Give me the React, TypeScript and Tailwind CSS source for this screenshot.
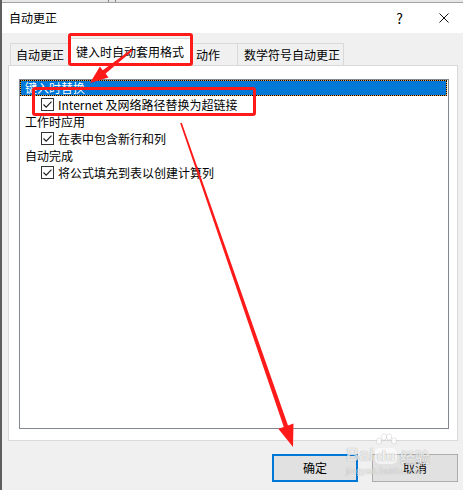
import React from 'react';

const font = "font-['Noto_Sans_CJK_SC','Microsoft_YaHei',sans-serif]";

const Check: React.FC = () => (
  <span className="w-[13px] h-[13px] border border-[#333333] bg-white flex items-center justify-center shrink-0">
    <svg width="11" height="11" viewBox="0 0 11 11">
      <path d="M1.5 5.5 L4.2 8.2 L9.5 2.6" fill="none" stroke="#1a1a1a" strokeWidth="1.1" />
    </svg>
  </span>
);

const CheckRow: React.FC<{ label: string }> = ({ label }) => (
  <div className="h-[17px] flex items-center pl-[21px] gap-[4px] text-[12px] text-black leading-[17px]">
    <Check />
    <span>{label}</span>
  </div>
);

const GroupRow: React.FC<{ label: string }> = ({ label }) => (
  <div className="h-[17px] flex items-center pl-[5px] text-[12px] text-black leading-[17px]">{label}</div>
);

export default function App() {
  return (
    <div className={`relative w-[463px] h-[490px] overflow-hidden flex bg-[#f0f0f0] ${font}`}>
      {/* window edge */}
      <div className="w-[2px] bg-[#5e5e5e] shrink-0" />

      <div className="flex-1 flex flex-col">
        {/* strip of the window behind */}
        <div className="h-[3px] bg-[#e6e6e6] border-b border-[#a3a3a3] flex">
          <div className="ml-[106px] w-px bg-[#8a8a8a]" />
          <div className="ml-[6px] w-px bg-[#8a8a8a]" />
        </div>

        {/* title bar */}
        <div className="h-[30px] bg-white flex items-center pl-[7px] pr-[14px]">
          <span className="text-[12px] text-black leading-none">自动更正</span>
          <span className="ml-auto text-[14px] text-black leading-none mr-[36px]">?</span>
          <svg width="10" height="10" viewBox="0 0 10 10">
            <path d="M0.5 0.5 L9.5 9.5 M9.5 0.5 L0.5 9.5" stroke="#111" strokeWidth="1" />
          </svg>
        </div>

        {/* body */}
        <div className="flex-1 flex flex-col">
          {/* tabs */}
          <div className="h-[32px] flex items-end pl-[8px] text-[12px] text-black">
            <div className="w-[58px] h-[22px] border-t border-l border-[#d9d9d9] bg-[#f0f0f0] flex items-center pl-[5px] leading-none">自动更正</div>
            <div className="relative z-10 w-[125px] h-[28px] -mb-px border border-b-0 border-[#d9d9d9] bg-white flex items-center pl-[7px] pb-[2px] leading-none">键入时自动套用格式</div>
            <div className="w-[44px] h-[22px] border-t border-[#d9d9d9] bg-[#f0f0f0] flex items-center pl-[3px] leading-none">动作</div>
            <div className="w-[107px] h-[22px] border-t border-l border-r border-[#d9d9d9] bg-[#f0f0f0] flex items-center pl-[6px] leading-none">数学符号自动更正</div>
          </div>

          {/* tab page */}
          <div className="ml-[6px] w-[450px] h-[376px] border border-[#d9d9d9] bg-white pt-[13px] pl-[10px]">
            <div className="w-[430px] h-[350px] border border-[#828790] bg-white">
              <div className="w-[427px] h-[16px] bg-[#0078d7] border border-[#e8a040] outline outline-1 outline-dotted outline-black -outline-offset-1 flex items-center pl-[4px] text-[12px] text-white leading-none">
                键入时替换
              </div>
              <CheckRow label="Internet 及网络路径替换为超链接" />
              <GroupRow label="工作时应用" />
              <CheckRow label="在表中包含新行和列" />
              <GroupRow label="自动完成" />
              <CheckRow label="将公式填充到表以创建计算列" />
            </div>
          </div>

          {/* buttons */}
          <div className="mt-[13px] flex justify-end gap-[14px] pr-[5px]">
            <button className="w-[86px] h-[28px] border-2 border-[#0078d7] bg-[#e1e1e1] text-[12px] text-black leading-none">确定</button>
            <button className="w-[86px] h-[28px] border border-[#adadad] bg-[#e1e1e1] text-[12px] text-black leading-none">取消</button>
          </div>
        </div>
      </div>

      {/* annotations */}
      <div className="absolute left-[68px] top-[33px] w-[125px] h-[33px] border-[3px] border-[#ff1a1a] rounded-[3px] z-20 pointer-events-none" />
      <div className="absolute left-[32px] top-[87px] w-[224px] h-[29px] border-[3px] border-[#ff1a1a] rounded-[3px] z-20 pointer-events-none" />
      <svg className="absolute left-0 top-0 z-30 pointer-events-none" width="463" height="490" viewBox="0 0 463 490">
        <polygon
          fill="#ff1a1a"
          points="131.4,49.2 102.8,70.2 99.9,66.4 90,83 108.5,77.4 105.6,73.6 132.6,50.8"
        />
        <polygon
          fill="#ff1a1a"
          points="181.8,122.7 288,425.5 293.5,423.6 293,447 278.3,428.8 283.8,426.9 180.2,123.3"
        />
      </svg>

      {/* watermark */}
      <div className="absolute left-[346px] top-[434px] z-30 pointer-events-none text-white/75 [text-shadow:0_0_1px_rgba(0,0,0,0.35)]">
        <div className="flex items-end h-[30px]">
          <span className="font-['Liberation_Sans',sans-serif] font-bold text-[18px] leading-none">Bai</span>
          <div className="relative flex flex-col items-center">
            <svg width="24" height="14" viewBox="0 0 24 14" className="mb-[1px]">
              <g fill="rgba(255,255,255,0.75)" stroke="rgba(0,0,0,0.2)" strokeWidth="0.5">
                <ellipse cx="5" cy="8" rx="2.6" ry="3.2" />
                <ellipse cx="10" cy="4" rx="2.6" ry="3.2" />
                <ellipse cx="15" cy="4" rx="2.6" ry="3.2" />
                <ellipse cx="20" cy="8" rx="2.6" ry="3.2" />
              </g>
            </svg>
            <span className="px-[2px] rounded-[5px] bg-white/60 text-[#f0f0f0] font-['Liberation_Sans',sans-serif] font-bold text-[15px] leading-[16px]">du</span>
          </div>
          <span className="ml-[2px] text-[15px] font-bold leading-none">经验</span>
        </div>
        <div className="font-['Liberation_Sans',sans-serif] text-[9px] leading-none mt-[3px] tracking-[0.3px]">jingyan.baidu.com</div>
      </div>
    </div>
  );
}
